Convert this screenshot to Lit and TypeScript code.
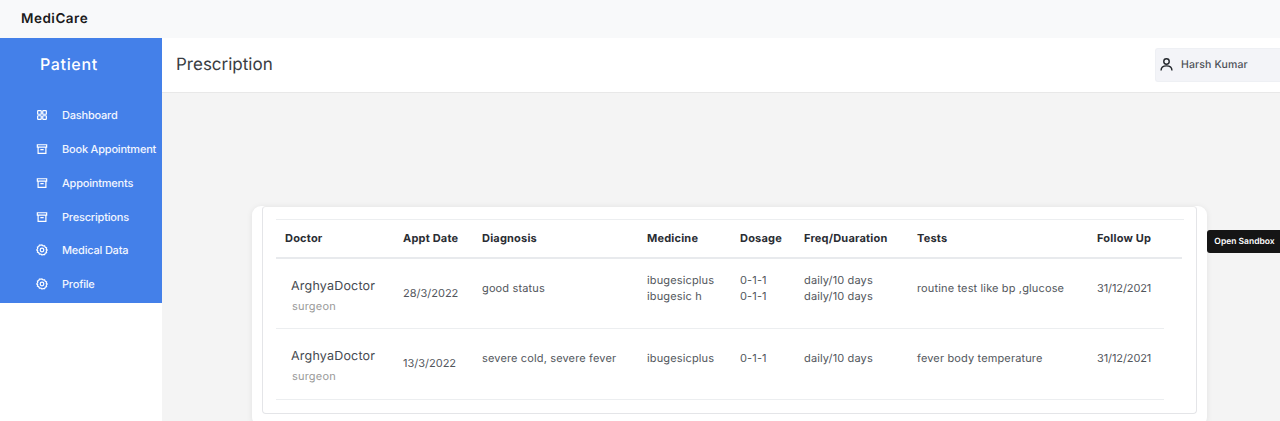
import { LitElement, html, css, svg } from "lit";
import { customElement } from "lit/decorators.js";

const gridIcon = svg`<rect x="2.2" y="2.2" width="4.8" height="4.8" rx=".8"/><rect x="9" y="2.2" width="4.8" height="4.8" rx=".8"/><rect x="2.2" y="9" width="4.8" height="4.8" rx=".8"/><rect x="9" y="9" width="4.800" height="4.800" rx=".8"/>`;
const boxIcon = svg`<path d="M1.800 2.300h12.400v3.200H1.800zM2.800 5.500v8.200h10.400V5.500M5.800 8.700h4.400"/>`;
const gearIcon = svg`<path d="M8 1.300l1.500 1.300 2-.2.800 1.900 1.800.9-.4 2L15 8l-1.300 1.500.4 1.900-1.800.9-.8 1.900-2-.2L8 14.700l-1.500-1.300-2 .2-.8-1.900-1.800-.9.4-1.900L1 8l1.300-1.800-.4-2 1.800-.9.800-1.900 2 .2z"/><circle cx="8" cy="8" r="2.400"/>`;

const nav = [
  { label: "Dashboard", icon: gridIcon },
  { label: "Book Appointment", icon: boxIcon },
  { label: "Appointments", icon: boxIcon },
  { label: "Prescriptions", icon: boxIcon },
  { label: "Medical Data", icon: gearIcon },
  { label: "Profile", icon: gearIcon },
];

const rows = [
  { date: "28/3/2022", diagnosis: "good status", medicine: ["ibugesicplus", "ibugesic h"], dosage: ["0-1-1", "0-1-1"], freq: ["daily/10 days", "daily/10 days"], tests: "routine test like bp ,glucose", follow: "31/12/2021" },
  { date: "13/3/2022", diagnosis: "severe cold, severe fever", medicine: ["ibugesicplus"], dosage: ["0-1-1"], freq: ["daily/10 days"], tests: "fever body temperature", follow: "31/12/2021" },
];

@customElement("app-root")
export class AppRoot extends LitElement {
  static styles = css`
    :host { display: block; position: relative; height: 421px; overflow: hidden; background: #fff; font-family: Inter, "Liberation Sans", sans-serif; color: #495057; text-rendering: geometricPrecision; }
    .top { height: 38px; background: #f8f9fa; display: flex; align-items: center; padding-left: 21px; font-size: 13.5px; font-weight: 600; color: #1a1a1a; letter-spacing: .5px; }
    .body { display: flex; align-items: flex-start; height: 383px; }
    .side { width: 162px; height: 265px; flex: none; background: #4480e9; color: #fff; box-sizing: border-box; }
    .side h2 { margin: 0; padding: 16px 0 0 40px; height: 60.4px; box-sizing: border-box; font-size: 16px; font-weight: 500; line-height: 20px; letter-spacing: .65px; }
    .nav { display: flex; flex-direction: column; }
    .item { height: 33.8px; display: flex; align-items: center; padding-left: 36px; gap: 14px; font-size: 11px; font-weight: 500; color: #f2f6ff; white-space: nowrap; letter-spacing: -.2px; }
    .item svg { width: 12px; height: 12px; flex: none; fill: none; stroke: #fff; stroke-width: 1.6; }
    .main { flex: 1; height: 383px; background: #f4f4f4; min-width: 0; }
    .head { height: 55px; background: #fff; border-bottom: 1px solid #e8e8e8; box-sizing: border-box; display: flex; align-items: center; justify-content: space-between; padding: 0 0 0 14px; }
    .head h1 { margin: 0 0 1px; font-size: 17px; font-weight: 400; color: #3a3d42; letter-spacing: 0; }
    .user { width: 125px; height: 34px; box-sizing: border-box; background: #f3f4f8; border: 1px solid #eef0f4; border-right: 0; border-radius: 3px 0 0 3px; display: flex; align-items: center; padding-left: 3px; gap: 7px; font-size: 10.5px; font-weight: 500; color: #4c5057; letter-spacing: .15px; margin-top: -1px; }
    .user svg { width: 15px; height: 15px; fill: none; stroke: #22262b; stroke-width: 1.5; }
    .content { padding: 113px 0 0 90px; }
    .card { width: 955px; height: 220px; background: #fff; border-radius: 9px; box-shadow: 0 1px 6px rgba(0,0,0,.08); box-sizing: border-box; padding: 0 10px; }
    .inner { height: 208px; box-sizing: border-box; background: #fff; border: 1px solid #e4e5e8; border-top-color: #ececec; border-radius: 4px; padding: 12px 0 0 13px; }
    .row { display: grid; grid-template-columns: 118px 79px 165px 93px 64px 113px 180px auto; box-sizing: border-box; padding-left: 9px; font-size: 11px; color: #52565c; letter-spacing: .14px; }
    .thead { width: 908px; height: 40px; padding-bottom: 4px; border-top: 1px solid #eceef0; background: linear-gradient(#e8eaed, #e8eaed) 0 100% / 906px 2px no-repeat; align-items: center; font-weight: 650; color: #2a2d33; font-size: 11px; letter-spacing: .2px; }
    .tr { width: 888px; height: 70px; border-bottom: 1px solid #eceef0; }
    .tr + .tr { height: 71px; }
    .cell { height: 58px; display: flex; flex-direction: column; justify-content: center; line-height: 16px; }
    .name { padding: 19px 0 0 6px; font-size: 12.5px; line-height: 18px; color: #454950; letter-spacing: .2px; white-space: nowrap; }
    .spec { padding: 2px 0 0 7px; font-size: 11px; line-height: 17px; color: #9a9a9a; letter-spacing: .2px; }
    .date { padding-top: 26px; line-height: 16px; letter-spacing: 0; }
    .follow { letter-spacing: -.1px; }
    .sandbox { position: absolute; left: 1207px; top: 230px; width: 73px; height: 23px; padding-left: 2px; box-sizing: border-box; background: #151515; color: #fff; border-radius: 3px 0 0 3px; font-size: 8.5px; font-weight: 600; display: flex; align-items: center; justify-content: center; }
  `;

  render() {
    return html`
      <div class="top">MediCare</div>
      <div class="body">
        <aside class="side">
          <h2>Patient</h2>
          <nav class="nav">
            ${nav.map((n) => html`<div class="item"><svg viewBox="0 0 16 16">${n.icon}</svg><span>${n.label}</span></div>`)}
          </nav>
        </aside>
        <main class="main">
          <header class="head">
            <h1>Prescription</h1>
            <div class="user">
              <svg viewBox="0 0 16 16"><circle cx="8" cy="4.800" r="2.900"/><path d="M2.200 14.500c0-3.200 2.500-5 5.800-5s5.800 1.800 5.800 5"/></svg>
              <span>Harsh Kumar</span>
            </div>
          </header>
          <div class="content">
            <section class="card">
              <div class="inner">
                <div class="row thead">
                  <div>Doctor</div><div>Appt Date</div><div>Diagnosis</div><div>Medicine</div><div>Dosage</div><div>Freq/Duaration</div><div>Tests</div><div>Follow Up</div>
                </div>
                ${rows.map((r) => html`
                  <div class="row tr">
                    <div><div class="name">ArghyaDoctor</div><div class="spec">surgeon</div></div>
                    <div class="date">${r.date}</div>
                    <div class="cell">${r.diagnosis}</div>
                    <div class="cell">${r.medicine.map((m) => html`<div>${m}</div>`)}</div>
                    <div class="cell">${r.dosage.map((m) => html`<div>${m}</div>`)}</div>
                    <div class="cell">${r.freq.map((m) => html`<div>${m}</div>`)}</div>
                    <div class="cell">${r.tests}</div>
                    <div class="cell follow">${r.follow}</div>
                  </div>`)}
              </div>
            </section>
          </div>
        </main>
      </div>
      <div class="sandbox">Open Sandbox</div>
    `;
  }
}
